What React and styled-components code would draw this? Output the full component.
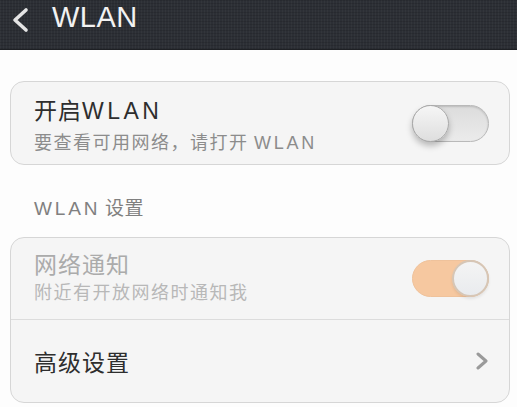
import React from "react";
import styled, { createGlobalStyle } from "styled-components";

const GlobalStyle = createGlobalStyle`
  html, body {
    margin: 0;
    padding: 0;
    background: #fdfdfd;
  }
  body {
    font-family: "Noto Sans CJK SC", "Liberation Sans", sans-serif;
  }
`;

const SPage = styled.div`
  width: 517px;
  height: 407px;
  overflow: hidden;
  background: #fdfdfd;
`;

const SHeader = styled.div`
  display: flex;
  align-items: flex-start;
  gap: 22px;
  height: 50px;
  padding: 7px 0 0 10px;
  box-sizing: border-box;
  background-color: #2c2f35;
  background-image:
    repeating-linear-gradient(0deg, rgba(0, 0, 0, 0.12) 0 1px, transparent 1px 3px),
    repeating-linear-gradient(90deg, rgba(255, 255, 255, 0.03) 0 1px, transparent 1px 3px);
  border-bottom: 1px solid #1e2024;
`;

const STitle = styled.h1`
  margin: -4px 0 0;
  font-family: "Liberation Sans", Arial, sans-serif;
  font-size: 29px;
  line-height: 29px;
  font-weight: normal;
  color: #f2f2f2;
  letter-spacing: 0.5px;
`;

const SContent = styled.div`
  padding: 31px 7px 0 10px;
`;

const SCard = styled.div`
  background: #f5f5f5;
  border: 1px solid #d6d6d6;
  border-radius: 14px;
  overflow: hidden;
`;

const SRow = styled.div`
  display: flex;
  align-items: center;
  justify-content: space-between;
  height: ${(p) => p.$height}px;
  padding: 0 20px 0 23px;
  box-sizing: border-box;
  & + & {
    border-top: 1px solid #dcdcdc;
  }
`;

const STextBlock = styled.div`
  display: flex;
  flex-direction: column;
  gap: ${(p) => p.$gap}px;
  margin-top: ${(p) => p.$shift}px;
`;

const SLatin = styled.span`
  font-family: "Liberation Sans", Arial, sans-serif;
  letter-spacing: 0.15em;
`;

const SRowTitle = styled.div`
  font-size: 23px;
  line-height: 28px;
  letter-spacing: 1px;
  color: ${(p) => (p.$disabled ? "#ababab" : "#2e2e2e")};
`;

const SRowSub = styled.div`
  font-size: 18px;
  line-height: 22px;
  letter-spacing: 1.5px;
  color: ${(p) => (p.$disabled ? "#b8b8b8" : "#8c8c8c")};
`;

const SSection = styled.div`
  margin: 30px 0 16px 24px;
  font-size: 19px;
  line-height: 24px;
  letter-spacing: 0.5px;
  color: #808080;
`;

const SSwitch = styled.div`
  position: relative;
  width: 77px;
  height: 37px;
  box-sizing: border-box;
  border-radius: 19px;
  background: ${(p) => (p.$on ? "#f6c8a0" : "linear-gradient(#dcdcdc, #ebebeb)")};
  border: 1px solid ${(p) => (p.$on ? "#efc29b" : "#b9b9b9")};
  box-shadow: ${(p) => (p.$on ? "none" : "inset 0 1px 2px rgba(0,0,0,0.15)")};
`;

const SKnob = styled.div`
  position: absolute;
  top: -1px;
  ${(p) => (p.$on ? "right: -1px;" : "left: -1px;")}
  width: 37px;
  height: 37px;
  box-sizing: border-box;
  border-radius: 50%;
  background: ${(p) =>
    p.$on ? "linear-gradient(#f4f4f4, #e9ebee)" : "linear-gradient(#f6f6f6, #dedede)"};
  border: ${(p) => (p.$on ? "2px solid #d6c6b6" : "1px solid #a9a9a9")};
  box-shadow: ${(p) =>
    p.$on ? "0 2px 3px rgba(0,0,0,0.08)" : "0 4px 6px rgba(0,0,0,0.25)"};
`;

const Switch = ({ on }) => (
  <SSwitch $on={on}>
    <SKnob $on={on} />
  </SSwitch>
);

const BackIcon = () => (
  <svg width="20" height="26" viewBox="0 0 20 26">
    <path d="M16 3 L5 13 L16 23" fill="none" stroke="#e4e4e4" strokeWidth="3.6" strokeLinecap="round" strokeLinejoin="round" />
  </svg>
);

const ChevronIcon = () => (
  <svg width="14" height="18" viewBox="0 0 14 18">
    <path d="M3 2 L11 9 L3 16" fill="none" stroke="#9a9a9a" strokeWidth="3" strokeLinecap="round" strokeLinejoin="round" />
  </svg>
);

const App = () => {
  return (
    <>
      <GlobalStyle />
      <SPage>
        <SHeader>
          <BackIcon />
          <STitle>WLAN</STitle>
        </SHeader>
        <SContent>
          <SCard>
            <SRow $height={82}>
              <STextBlock $gap={5} $shift={2}>
                <SRowTitle>
                  开启<SLatin>WLAN</SLatin>
                </SRowTitle>
                <SRowSub>
                  要查看可用网络，请打开 <SLatin>WLAN</SLatin>
                </SRowSub>
              </STextBlock>
              <Switch on={false} />
            </SRow>
          </SCard>
          <SSection>
            <SLatin>WLAN</SLatin> 设置
          </SSection>
          <SCard>
            <SRow $height={81}>
              <STextBlock $gap={3} $shift={-6}>
                <SRowTitle $disabled>网络通知</SRowTitle>
                <SRowSub $disabled>附近有开放网络时通知我</SRowSub>
              </STextBlock>
              <Switch on />
            </SRow>
            <SRow $height={83}>
              <SRowTitle>高级设置</SRowTitle>
              <ChevronIcon />
            </SRow>
          </SCard>
        </SContent>
      </SPage>
    </>
  );
};

export default App;
